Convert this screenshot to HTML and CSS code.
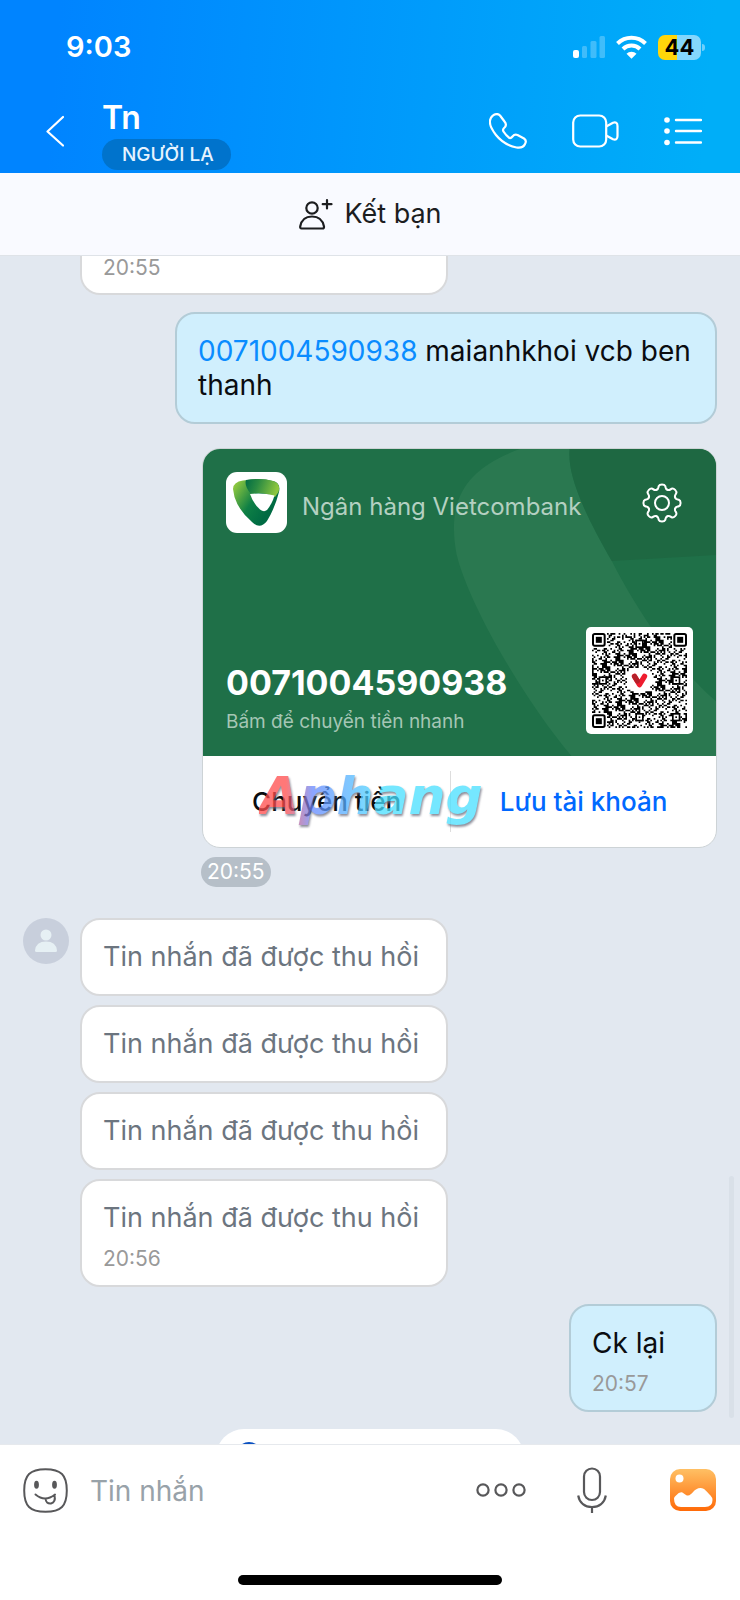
FILE: index.html
```html
<!DOCTYPE html>
<html lang="vi">
<head>
<meta charset="utf-8">
<meta name="viewport" content="width=device-width, initial-scale=1">
<title>Tn</title>
<link rel="stylesheet" href="styles.css">
</head>
<body>
<div class="app">
  <header class="header">
    <div class="status">
      <span class="clock">9:03</span>
      <div class="status-icons">
        <svg width="32" height="22" viewBox="0 0 32 22" fill="#fff" aria-hidden="true">
          <rect x="0" y="14" width="6" height="8" rx="2"/>
          <g opacity=".25"><rect x="9" y="10" width="5" height="12" rx="1.5"/><rect x="17.500" y="5" width="6" height="17" rx="1.500"/><rect x="26.500" y="0" width="5.500" height="22" rx="1.500"/></g>
        </svg>
        <svg width="31" height="24" viewBox="0.500 0 31 24" aria-hidden="true">
          <g fill="none" stroke="#fff" stroke-width="4"><path d="M2 8.500a20 20 0 0 1 28 0"/><path d="M7.500 14a12 12 0 0 1 17 0"/></g>
          <path d="M11 18.800a7 7 0 0 1 10 0L16 23.700z" fill="#fff"/>
        </svg>
        <span class="battery">44</span>
      </div>
    </div>
    <div class="titlebar">
      <button class="icon-btn back" aria-label="Quay lại">
        <svg width="18" height="32" viewBox="0 0 18 32" fill="none" stroke="#fff" stroke-width="2.200" stroke-linecap="round" stroke-linejoin="round"><path d="M17 2 1.500 16.500 17 30.500"/></svg>
      </button>
      <div class="contact">
        <h1 class="name">Tn</h1>
        <span class="tag">NGƯỜI LẠ</span>
      </div>
      <nav class="actions">
        <button class="icon-btn" aria-label="Gọi thoại">
          <svg width="38" height="36" viewBox="0 0 38 36" fill="none" stroke="#fff" stroke-width="2.200" stroke-linejoin="round"><path d="M3.500 2.800Q8-.5 11 2.500L15.500 8.500Q18 11.500 16 14Q13 16.500 14.500 18.500Q17 22.500 20.500 25Q22 25.500 23.500 23.500Q25.500 21 28.500 22L35 25.500Q38 27.500 36 31Q34 35.500 27.500 34.500Q15 32 7 22Q0 13 1 7.500Q1.500 4.500 3.500 2.800Z"/></svg>
        </button>
        <button class="icon-btn" aria-label="Gọi video">
          <svg width="47" height="34" viewBox="0 0 47 34" fill="none" stroke="#fff" stroke-width="2.200" stroke-linejoin="round"><rect x="1.200" y="1.500" width="33" height="31" rx="7"/><path d="M34.200 12.500 41 8.700Q45.500 7.500 45.500 12V22Q45.500 26.500 41 25.300L34.200 21.500"/></svg>
        </button>
        <button class="icon-btn" aria-label="Tùy chọn">
          <svg width="38" height="30" viewBox="0 0 38 30" aria-hidden="true"><g fill="#fff"><circle cx="3" cy="4" r="2.800"/><circle cx="3" cy="15" r="2.800"/><circle cx="3" cy="26.500" r="2.800"/></g><path d="M12 4h25M12 15h25M12 26.500h25" stroke="#fff" stroke-width="2.400" stroke-linecap="round"/></svg>
        </button>
      </nav>
    </div>
  </header>

  <button class="add-friend">
    <svg width="35" height="32" viewBox="0 0 35 32" fill="none" stroke="#1c1d1f" stroke-width="2.200" stroke-linecap="round" stroke-linejoin="round" aria-hidden="true"><circle cx="14" cy="10" r="5.700"/><path d="M3.500 30.500Q2 30.500 2.200 28.500Q4 18.500 14 18.500T26 28.500Q26.200 30.500 24.500 30.500ZM29 2V10.500M24.700 6.200H33.500"/></svg>
    Kết bạn
  </button>

  <main class="chat">
    <article class="bubble in clipped"><time class="time">20:55</time></article>

    <article class="bubble out wide"><a class="number-link" href="#">0071004590938</a> maianhkhoi vcb ben thanh</article>

    <section class="card">
      <div class="card-face">
        <svg class="card-art" viewBox="0 0 512 307" preserveAspectRatio="xMaxYMid slice" aria-hidden="true">
          <path fill="#2a7850" d="M317 0C262 20 243 50 253 105C265 155 320 250 368 307H512V252C470 215 435 165 408 112C372 50 364 20 366 0Z"/>
          <path fill="#1e6842" d="M366 0C364 20 372 50 408 112L512 106V0Z"/>
        </svg>
        <div class="card-top">
          <svg class="bank-logo" width="61" height="61" viewBox="0 0 61 61" aria-hidden="true">
            <defs>
              <linearGradient id="leaf" x1="0" y1=".2" x2=".75" y2=".7"><stop stop-color="#8cc63f"/><stop offset=".55" stop-color="#0e7f45"/><stop offset="1" stop-color="#006b43"/></linearGradient>
              <linearGradient id="fold" x1="0" y1="0" x2="1" y2=".2"><stop stop-color="#006b43"/><stop offset=".4" stop-color="#2a8a42"/><stop offset="1" stop-color="#8cc63f"/></linearGradient>
            </defs>
            <rect width="61" height="61" rx="11" fill="#fff"/>
            <path fill="url(#leaf)" d="M7 17Q7 10 17 8.500Q33 5.500 47 9Q55 11 53 20Q49 36 41 49Q34 58 26 50Q13 39 8.500 25Z"/>
            <path fill="url(#fold)" d="M20 8Q36 5.500 48 9.200Q55 12 52.500 20L49 25Q36 19 25 22Q18 14 20 8Z"/>
            <path fill="#fff" d="M24 22Q37 20.500 48.500 23.500Q46 32 41 38Q38 40.500 34 37.500Q27 31 24 22Z"/>
          </svg>
          <span class="bank-name">Ngân hàng Vietcombank</span>
          <button class="icon-btn gear" aria-label="Cài đặt">
            <svg width="40" height="40" viewBox="-20 -20 40 40" fill="none" stroke="#fff" stroke-width="2" stroke-linecap="round">
              <defs><path id="tooth" d="M-5.470-13.200C-3.200-14.100-3.800-15.500-3.300-16.800Q-2.600-18.600 0-18.600T3.300-16.800C3.800-15.500 3.200-14.100 5.470-13.200"/></defs>
              <circle r="7"/>
              <use href="#tooth"/><use href="#tooth" transform="rotate(45)"/><use href="#tooth" transform="rotate(90)"/><use href="#tooth" transform="rotate(135)"/><use href="#tooth" transform="rotate(180)"/><use href="#tooth" transform="rotate(225)"/><use href="#tooth" transform="rotate(270)"/><use href="#tooth" transform="rotate(315)"/>
            </svg>
          </button>
        </div>
        <div class="card-bottom">
          <div class="account">
            <strong class="account-no">0071004590938</strong>
            <span class="hint">Bấm để chuyển tiền nhanh</span>
          </div>
          <svg class="qr" viewBox="0 0 57 57" role="img" aria-label="Mã QR"></svg>
        </div>
      </div>
      <div class="card-actions">
        <button class="card-btn">Chuyển tiền</button>
        <button class="card-btn primary">Lưu tài khoản</button>
        <span class="watermark">Aphang</span>
      </div>
    </section>
    <time class="time-pill">20:55</time>

    <section class="thread">
      <svg class="avatar" width="46" height="46" viewBox="0 0 46 46" aria-hidden="true"><circle cx="23" cy="23" r="23" fill="#c8cfdc"/><g fill="#e6f0f4"><circle cx="23" cy="17" r="5.500"/><path d="M12 32.500Q13 23.500 23 23.500T34 32.500Q34 34 32.500 34H13.500Q12 34 12 32.500Z"/></g></svg>
      <div class="stack">
        <article class="bubble in">Tin nhắn đã được thu hồi</article>
        <article class="bubble in">Tin nhắn đã được thu hồi</article>
        <article class="bubble in">Tin nhắn đã được thu hồi</article>
        <article class="bubble in timed">Tin nhắn đã được thu hồi<time class="time">20:56</time></article>
      </div>
    </section>

    <article class="bubble out short timed">Ck lại<time class="time">20:57</time></article>

    <div class="scrollbar"></div>
    <div class="toast">
      <svg width="26" height="26" viewBox="0 0 26 26" fill="none" stroke="#0a50c0" stroke-width="2.500" aria-hidden="true"><circle cx="13" cy="13" r="11.700"/></svg>
    </div>
  </main>

  <footer class="composer">
    <div class="compose-row">
      <button class="icon-btn" aria-label="Nhãn dán">
        <svg width="45" height="45" viewBox="0 0 45 45" fill="none" stroke="#58585a" stroke-width="2" stroke-linecap="round"><path d="M22.500 1.200C38 1.200 43.800 7 43.800 22.500S38 43.800 22.500 43.800 1.200 38 1.200 22.500 7 1.200 22.500 1.200Z"/><g fill="#58585a" stroke="none"><ellipse cx="13.500" cy="16.800" rx="2.400" ry="4"/><ellipse cx="31.500" cy="16.800" rx="2.400" ry="4"/></g><path d="M12.500 26.500Q22 34.500 32 26.500M22.500 30.500Q23 36 28 35.500Q33 34 31.500 27.500"/></svg>
      </button>
      <input class="message" type="text" placeholder="Tin nhắn" aria-label="Tin nhắn">
      <button class="icon-btn" aria-label="Thêm">
        <svg width="50" height="16" viewBox="0 0 50 16" fill="none" stroke="#58585a" stroke-width="2.200"><circle cx="7" cy="8" r="5.600"/><circle cx="25" cy="8" r="5.600"/><circle cx="43" cy="8" r="5.600"/></svg>
      </button>
      <button class="icon-btn mic" aria-label="Ghi âm">
        <svg width="30" height="46" viewBox="0 0 30 46" fill="none" stroke="#58585a" stroke-width="2.200"><rect x="7" y="1.500" width="16" height="31.500" rx="8"/><path d="M1.200 28.500C2.500 36 8 40 15 40S27.500 36 28.800 28.500M15 40V46"/></svg>
      </button>
      <button class="icon-btn" aria-label="Ảnh">
        <svg width="46" height="42" viewBox="0 0 46 42" aria-hidden="true"><defs><linearGradient id="sun" x2="0" y2="1"><stop stop-color="#ffc064"/><stop offset="1" stop-color="#ff6a08"/></linearGradient></defs><rect width="46" height="42" rx="10" fill="url(#sun)"/><circle cx="9.500" cy="9.500" r="4" fill="#fff"/><path fill="#fff" d="M4 29.500Q4 28 6 26.500Q9 23 11.500 23.200C14 23.500 15 26.500 18 26.500C22 26.500 24 19 30.500 19C35 19 37 23.500 40.500 26.500Q42.500 28.500 42.500 31Q42.500 38 35 38H11Q4 38 4 29.500Z"/></svg>
      </button>
    </div>
    <div class="home-bar"></div>
  </footer>
</div>
<script src="qr.js"></script>
</body>
</html>
```

FILE: styles.css
```css
* { box-sizing: border-box; }

body {
  margin: 0;
  font-family: Inter, "Noto Sans", sans-serif;
  font-size: 28px;
  line-height: 34px;
  color: #0a0c10;
}

button, input {
  font: inherit;
  color: inherit;
  border: 0;
  padding: 0;
  background: none;
}

.app {
  display: flex;
  flex-direction: column;
  height: 100vh;
  overflow: hidden;
}

.icon-btn { display: flex; }

/* Header */
.header {
  color: #fff;
  background: linear-gradient(95deg, #0084ff 8%, #00aef8 95%);
  padding: 30px 36px 3px 46px;
}

.status {
  display: flex;
  justify-content: space-between;
  align-items: center;
  padding-left: 20px;
}

.clock { font-size: 29px; font-weight: 600; }

.status-icons { display: flex; align-items: center; gap: 11px; }

.battery {
  position: relative;
  width: 43px;
  height: 25px;
  margin-right: 3px;
  border-radius: 7px;
  background: linear-gradient(90deg, #ffd60a 45%, #84d6fc 45%);
  color: #000;
  font-size: 22px;
  font-weight: 700;
  line-height: 25px;
  text-align: center;
}

.battery::after {
  content: "";
  position: absolute;
  top: 9px;
  right: -4px;
  width: 3px;
  height: 7px;
  border-radius: 0 3px 3px 0;
  background: #6fcffb;
}

.titlebar {
  display: flex;
  align-items: center;
  padding-top: 35px;
}

.back { padding-bottom: 8px; }

.contact {
  display: flex;
  flex-direction: column;
  align-items: flex-start;
  gap: 3px;
  flex: 1;
  padding-left: 38px;
}

.name { margin: 0; font-size: 32px; font-weight: 600; line-height: 37px; }

.tag {
  padding: 0 17px 0 20px;
  border-radius: 16px;
  background: #0073cc;
  color: #e6f3ff;
  font-size: 19px;
  font-weight: 500;
  line-height: 31px;
}

.actions { display: flex; align-items: center; gap: 45px; padding: 0 2px 8px 0; }

/* Add friend bar */
.add-friend {
  display: flex;
  justify-content: center;
  align-items: center;
  gap: 11px;
  height: 83px;
  flex: none;
  border-bottom: 1px solid #dfe3e8;
  background: #f9faff;
  color: #1c1d1f;
  font-size: 27px;
}

/* Conversation */
.chat {
  position: relative;
  flex: 1;
  min-height: 0;
  display: flex;
  flex-direction: column;
  padding: 0 23px;
  overflow: hidden;
  background: #e2e8f0;
}

.bubble {
  padding: 20px 21px;
  border: 2px solid #d8d9db;
  border-radius: 20px;
}

.in { background: #fff; color: #6c757f; font-size: 27px; }

.out { align-self: flex-end; background: #d0effd; border-color: #b3ccd7; }

.timed { padding-bottom: 14px; }

.time {
  display: block;
  padding-top: 12px;
  color: #999;
  font-size: 21px;
  line-height: 24px;
}

.clipped {
  align-self: flex-start;
  width: 368px;
  margin-left: 57px;
  padding: 0 21px 13px;
  border-top: 0;
  border-radius: 0 0 20px 20px;
}

.clipped .time { padding: 0; }

.wide { width: 542px; margin-top: 17px; }

.short { width: 148px; margin-top: 17px; }

.number-link { color: #0a8cff; text-decoration: none; }

/* Bank card */
.card {
  align-self: flex-end;
  flex: none;
  width: 515px;
  margin-top: 24px;
  border: 1px solid #cdd3d6;
  border-radius: 18px;
  overflow: hidden;
  background: #fff;
}

.card-face {
  position: relative;
  display: flex;
  flex-direction: column;
  justify-content: space-between;
  height: 307px;
  padding: 23px 23px 22px;
  background: #1f7048;
  color: #fff;
}

.card-art { position: absolute; inset: 0; width: 100%; height: 100%; }

.card-top { position: relative; display: flex; gap: 15px; align-items: center; }

.bank-name { flex: 1; padding-top: 9px; font-size: 24px; color: #b4d0c1; }

.gear { margin-right: 11px; }

.card-bottom { position: relative; display: flex; justify-content: space-between; align-items: flex-end; }

.account { display: flex; flex-direction: column; gap: 5px; }

.account-no { font-size: 34px; line-height: 44px; }

.hint { font-size: 19px; line-height: 24px; color: #a5c6b5; }

.qr {
  width: 107px;
  height: 107px;
  padding: 6px;
  border-radius: 5px;
  background: #fff;
}

.card-actions { position: relative; display: flex; padding: 15px 0; }

.card-btn {
  flex: 14;
  height: 61px;
  font-size: 26px;
  font-weight: 500;
}

.primary { flex: 15; border-left: 1px solid #ddd; color: #0068ff; }

.watermark {
  position: absolute;
  left: 56px;
  top: 5px;
  font-family: "DejaVu Sans", sans-serif;
  font-size: 52px;
  font-style: italic;
  font-weight: 700;
  line-height: 70px;
  color: transparent;
  background: linear-gradient(90deg, #ff4c4c 12%, #6688ff 24%, #55b4ff 40%, #48e0ff 55%);
  background-clip: text;
  -webkit-background-clip: text;
  filter: drop-shadow(1px 2px 1px #667);
  opacity: .75;
  pointer-events: none;
}

.time-pill {
  align-self: flex-start;
  margin: 9px 0 0 178px;
  padding: 0 6px;
  border-radius: 15px;
  background: #b6bfc8;
  color: #fff;
  font-size: 21px;
  line-height: 30px;
}

/* Incoming thread */
.thread { display: flex; gap: 11px; margin-top: 31px; }

.avatar { flex: none; }

.stack { display: flex; flex-direction: column; gap: 9px; width: 368px; white-space: nowrap; }

.scrollbar {
  position: absolute;
  right: 6px;
  bottom: 26px;
  width: 5px;
  height: 242px;
  border-radius: 3px;
  background: #d9e0e8;
}

.toast {
  position: absolute;
  left: 50%;
  bottom: -41px;
  width: 308px;
  height: 56px;
  margin-left: -154px;
  padding: 12px 20px;
  border-radius: 28px;
  background: #fff;
}

/* Composer */
.composer {
  flex: none;
  padding: 22px 24px 15px 23px;
  border-top: 1px solid #e6e9ed;
  background: #fff;
}

.compose-row { display: flex; align-items: center; padding-bottom: 62px; }

.message { flex: 1; min-width: 0; padding: 2px 0 0 22px; outline: 0; }

.message::placeholder { color: #98a2a9; opacity: 1; }

.mic { margin: 0 63px 0 51px; }

.home-bar { width: 264px; height: 10px; margin: 0 auto; border-radius: 5px; background: #000; }
```

FILE: qr.js
```js
(function () {
  var size = 57;
  var seed = 4590938;
  var d = "";

  function next() {
    seed = (seed * 1103515245 + 12345) % 2147483648;
    return seed / 2147483648;
  }

  function reserved(x, y) {
    var corner = (x < 9 && y < 9) || (x > size - 10 && y < 9) || (x < 9 && y > size - 10);
    return corner || Math.hypot(x - 28, y - 28) < 8;
  }

  for (var y = 0; y < size; y++) {
    for (var x = 0; x < size; x++) {
      if (next() < 0.5 && !reserved(x, y)) d += "M" + x + " " + y + "h1v1h-1z";
    }
  }

  function finder(x, y) {
    return '<rect x="' + (x + 0.6) + '" y="' + (y + 0.6) + '" width="7" height="7" rx="1" fill="none" stroke="#000" stroke-width="1.2"/>' +
      '<rect x="' + (x + 2.3) + '" y="' + (y + 2.3) + '" width="3.6" height="3.6"/>';
  }

  function align(x, y) {
    return '<rect x="' + x + '" y="' + y + '" width="5" height="5"/>' +
      '<rect x="' + (x + 1) + '" y="' + (y + 1) + '" width="3" height="3" fill="#fff"/>' +
      '<rect x="' + (x + 2) + '" y="' + (y + 2) + '" width="1" height="1"/>';
  }

  document.querySelector(".qr").innerHTML =
    '<path d="' + d + '"/>' +
    finder(0, 0) + finder(size - 8.2, 0) + finder(0, size - 8.2) +
    align(26, 4) + align(4, 26) + align(48, 26) + align(26, 48) + align(48, 48) +
    '<path d="M25.500 26 28.500 31 31.500 26" fill="none" stroke="#ee1c2e" stroke-width="3.200" stroke-linecap="round" stroke-linejoin="round"/>' +
    '<path d="M25.500 26 27.200 28.800" stroke="#b5202a" stroke-width="3" stroke-linecap="round"/>';
})();
```
